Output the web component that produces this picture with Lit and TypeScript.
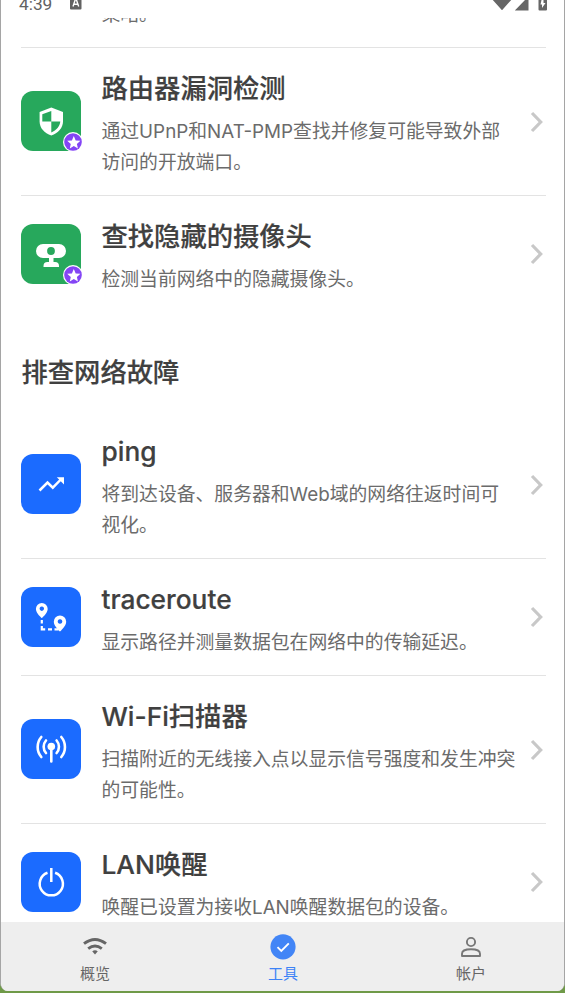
import { LitElement, html, css, svg, nothing } from "lit";
import { customElement, property } from "lit/decorators.js";

const glyphs: Record<string, unknown> = {
  shield: svg`<path fill="#fff" fill-rule="evenodd" d="M30.300 16.500 42 21v9.500c0 6.500-5 11.500-11.700 14-7-2.500-11.700-7.500-11.700-14V21Z"/><path fill="#27a85c" d="M30.300 20v10.500h9c-.5 5-3.800 8.600-9 11V30.500h-9V23.200Z"/>`,
  camera: svg`<path fill="#fff" d="M22 20h16a7 7 0 0 1 0 14h-5.500v4h1.500a4 4 0 0 1 4 4v1H22.500v-1a4 4 0 0 1 4-4H28v-4h-6a7 7 0 0 1 0-14Z"/><circle cx="30" cy="27" r="3.900" fill="#27a85c"/>`,
  trend: svg`<path fill="none" stroke="#fff" stroke-width="2.500" d="m18.500 36.500 8-8 5.300 5.200 9-9.200"/><path fill="#fff" d="M35.800 23.200H43v7.200Z"/>`,
  route: svg`<path fill="#fff" fill-rule="evenodd" d="M20.800 16a5.900 5.900 0 0 1 5.900 5.900c0 4.200-5.900 9.100-5.900 9.100s-5.900-4.900-5.900-9.100a5.900 5.900 0 0 1 5.900-5.900Zm0 3.500a2.200 2.200 0 1 0 .01 0ZM39 28.500a6.200 6.200 0 0 1 6.200 6.200c0 4.400-6.200 9.800-6.200 9.800s-6.200-5.400-6.200-9.800a6.200 6.200 0 0 1 6.200-6.200Zm0 3.700a2.300 2.300 0 1 0 .01 0Z"/><path fill="none" stroke="#fff" stroke-width="2.200" d="M20.800 33v3.500M20.800 39v3.400h3.400M27 42.400h4M33.500 42.400h4"/>`,
  antenna: svg`<circle cx="30.300" cy="27.500" r="3.800" fill="#fff"/><path fill="none" stroke="#fff" stroke-width="2.600" stroke-linecap="round" d="M30.300 29v13.500M25 21.500a9.500 9.500 0 0 0 0 12.500M35.600 21.500a9.500 9.500 0 0 1 0 12.500M20.300 18a15.500 15.500 0 0 0 0 20M40.300 18a15.500 15.500 0 0 1 0 20"/>`,
  power: svg`<path fill="none" stroke="#fff" stroke-width="2.500" d="M26.500 20.800a11.600 11.600 0 1 0 7.600 0M30.300 16v14"/>`,
};

@customElement("tool-row")
class ToolRow extends LitElement {
  @property() icon = "";
  @property() heading = "";
  @property({ attribute: false }) lines: string[] = [];
  @property({ type: Boolean }) premium = false;

  static styles = css`
    :host { display: flex; align-items: center; padding: 22px 0 17px; position: relative; }
    .tile { position: relative; flex: none; width: 60px; height: 60px; margin: -5.200px 20.500px 0 0; border-radius: 12px; background: #1b6bff; }
    .tile.green { background: #27a85c; }
    .tile svg { display: block; }
    .tile .badge { position: absolute; right: -1.500px; bottom: -1px; }
    .body { flex: 1; min-width: 0; white-space: nowrap; }
    .title { font-size: 26.300px; line-height: 37px; font-weight: 500; color: #404040; -webkit-text-stroke: .2px #404040; margin-bottom: 9px; }
    .line { font-size: 18.820px; line-height: 31px; color: #6b6b6b; }
    .chev { flex: none; margin-top: -4.500px; }
  `;

  render() {
    return html`
      <div class="tile ${this.premium ? "green" : ""}">
        <svg width="60" height="60" viewBox="0 0 60 60">${glyphs[this.icon]}</svg>
        ${this.premium
          ? html`<svg class="badge" width="20" height="20" viewBox="0 0 20 20"><circle cx="10" cy="10" r="10" fill="#fff"/><circle cx="10" cy="10" r="8.800" fill="#8445f5"/><path fill="#fff" d="m10.800 4 1.900 4.400 4.700.4-3.500 3.100 1 4.700-4.100-2.500-4 2.500 1-4.700L4.200 8.800l4.700-.4Z"/></svg>`
          : nothing}
      </div>
      <div class="body">
        <div class="title">${this.heading}</div>
        ${this.lines.map((l) => html`<div class="line">${l}</div>`)}
      </div>
      <svg class="chev" width="18" height="24" viewBox="0 0 18 24"><path d="m4 3 8.700 9L4 21" fill="none" stroke="#c8c8c8" stroke-width="3.200"/></svg>
    `;
  }
}

@customElement("app-root")
class AppRoot extends LitElement {
  static styles = css`
    :host { display: block; height: 993px; overflow: hidden; background: #6f9a48; font-family: Inter, "Noto Sans CJK SC", sans-serif; }
    .window { box-sizing: border-box; height: 991px; display: flex; flex-direction: column; background: #fff; border: solid #a5a5a5; border-width: 0 1px; border-radius: 0 0 8px 8px; overflow: hidden; }
    .status { flex: none; height: 18px; display: flex; overflow: hidden; color: #626262; padding: 0 14px 0 18px; align-items: flex-start; }
    .time { font: 400 17.300px/20px Roboto, sans-serif; margin-top: -6px; width: 50px; }
    .spacer { flex: 1; }
    .content { flex: 1; min-height: 0; overflow: hidden; padding: 0 18px 0 20px; }
    .previous { height: 29px; overflow: hidden; border-bottom: 1px solid #e3e3e3; padding-left: 80.500px; font-size: 18.800px; color: #6b6b6b; }
    .previous div { line-height: 31px; margin-top: -19px; }
    tool-row + tool-row { border-top: 1px solid #e3e3e3; }
    .section { font-size: 26.300px; line-height: 38px; font-weight: 500; color: #404040; -webkit-text-stroke: .2px #404040; padding: 42px 0 19px .5px; }
    .nav { flex: none; height: 69px; background: #eee; display: grid; grid-template-columns: repeat(3, 188px); justify-content: center; }
    .tab { display: flex; flex-direction: column; align-items: center; padding: 11px 0 0 1px; font-size: 15px; line-height: 22px; color: #666; gap: 2px; }
    .active { color: #3c82f6; }
  `;

  render() {
    return html`
      <div class="window">
        <div class="status">
          <span class="time">4:39</span>
          <svg width="14" height="12" viewBox="0 0 14 12"><path fill="#626262" d="M1 0h11.500v8.500a1 1 0 0 1-1 1H2a1 1 0 0 1-1-1Z"/><path d="m4 6.500 2.300-7h1l2.400 7M5 4.200h4" fill="none" stroke="#fff" stroke-width="1.400"/></svg>
          <span class="spacer"></span>
          <svg width="58" height="12" viewBox="0 0 58 12" fill="#666"><path d="M.8 0h18.400L10 10.300ZM36.500 0v10.500H22.800L33 0ZM46.500 0H55v9.500a1 1 0 0 1-1 1h-6.500a1 1 0 0 1-1-1Z"/><path fill="#fff" d="M49.500 0h2v3h2L50 8V4.500h-1.500Z"/></svg>
        </div>
        <div class="content">
          <div class="previous"><div>策略。</div></div>
          <tool-row premium icon="shield" heading="路由器漏洞检测" .lines=${["通过UPnP和NAT-PMP查找并修复可能导致外部", "访问的开放端口。"]}></tool-row>
          <tool-row premium icon="camera" heading="查找隐藏的摄像头" .lines=${["检测当前网络中的隐藏摄像头。"]}></tool-row>
          <div class="section">排查网络故障</div>
          <tool-row icon="trend" heading="ping" .lines=${["将到达设备、服务器和Web域的网络往返时间可", "视化。"]}></tool-row>
          <tool-row icon="route" heading="traceroute" .lines=${["显示路径并测量数据包在网络中的传输延迟。"]}></tool-row>
          <tool-row icon="antenna" heading="Wi-Fi扫描器" .lines=${["扫描附近的无线接入点以显示信号强度和发生冲突", "的可能性。"]}></tool-row>
          <tool-row icon="power" heading="LAN唤醒" .lines=${["唤醒已设置为接收LAN唤醒数据包的设备。"]}></tool-row>
        </div>
        <div class="nav">
          <div class="tab">
            <svg width="28" height="28" viewBox="0 0 28 28"><path fill="none" stroke="#666" stroke-width="2.900" d="M3 10.700q11-8.600 22 0M7.200 15.600q6.800-5.200 13.600 0"/><path d="M11.200 18.200q2.800-1.800 5.600 0L14 21.600Z" fill="#666"/></svg>
            概览
          </div>
          <div class="tab active">
            <svg width="28" height="28" viewBox="0 0 28 28"><circle cx="14" cy="13.800" r="12.600" fill="#4285f6"/><path fill="none" stroke="#fff" stroke-width="1.900" d="m8.500 14.200 3.800 3.800 7.500-7.600"/></svg>
            工具
          </div>
          <div class="tab">
            <svg width="28" height="28" viewBox="0 0 28 28"><g fill="none" stroke="#777" stroke-width="1.900"><circle cx="14" cy="9" r="4.100"/><path d="M5 23v-2.300c0-3.500 5-4.500 9-4.500s9 1 9 4.500V23Z" stroke-linejoin="round"/></g></svg>
            帐户
          </div>
        </div>
      </div>
    `;
  }
}
